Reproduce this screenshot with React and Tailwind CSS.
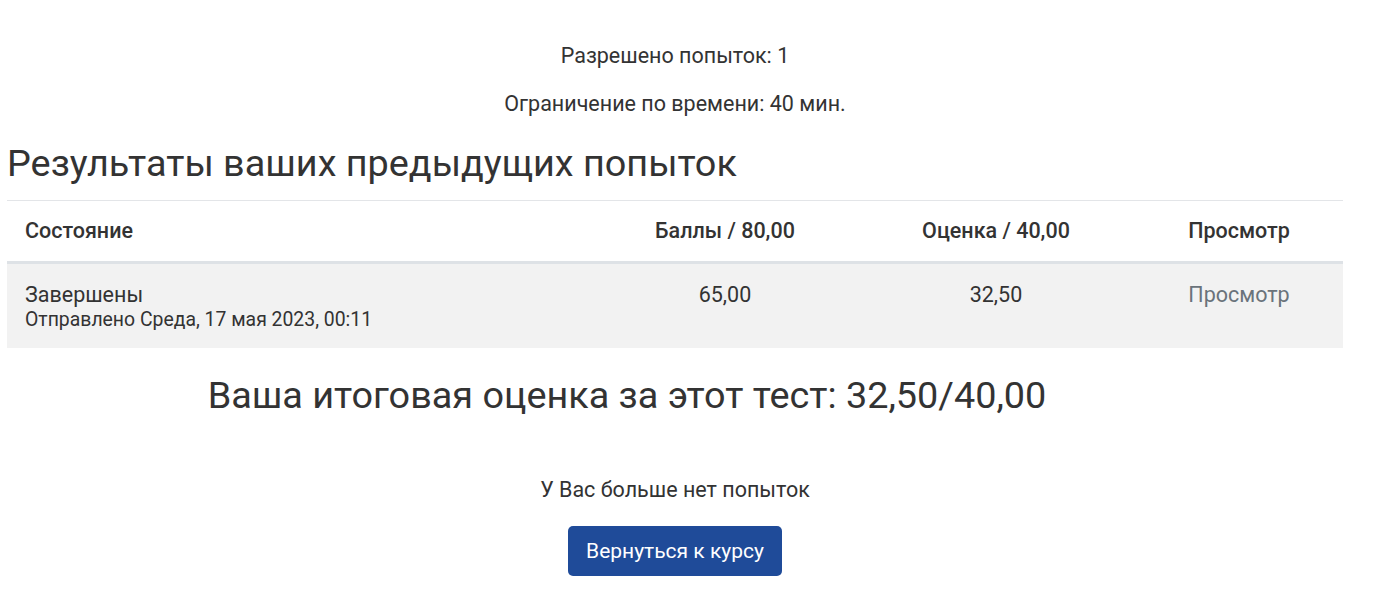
export default function App() {
  return (
    <div className="min-h-[609px] bg-white font-['Roboto',sans-serif] text-[#333]">
      <div className="w-[1336px] ml-[7px] pt-[41px]">
        <div className="text-center text-[21.5px] leading-[30px]">
          <p>Разрешено попыток: 1</p>
          <p className="mt-[18px]">Ограничение по времени: 40 мин.</p>
        </div>

        <h2 className="mt-[22px] text-[37.8px] leading-[44px] font-normal">
          Результаты ваших предыдущих попыток
        </h2>

        <table className="mt-[15px] w-full border-collapse text-[21.5px] leading-[30px]">
          <thead>
            <tr className="border-t border-[#e3e5e8] border-b-[3px] border-b-[#dee2e6]">
              <th className="w-[586px] text-left font-medium py-[15px] pl-[18px]">Состояние</th>
              <th className="w-[264px] text-center font-medium py-[15px]">Баллы / 80,00</th>
              <th className="w-[278px] text-center font-medium py-[15px]">Оценка / 40,00</th>
              <th className="text-center font-medium py-[15px]">Просмотр</th>
            </tr>
          </thead>
          <tbody>
            <tr className="bg-[#f2f2f2] align-top">
              <td className="pl-[18px] pt-[16px] pb-[18px]">
                <div>Завершены</div>
                <div className="text-[19.4px] leading-[20px]">Отправлено Среда, 17 мая 2023, 00:11</div>
              </td>
              <td className="text-center pt-[16px]">65,00</td>
              <td className="text-center pt-[16px]">32,50</td>
              <td className="text-center pt-[16px]">
                <a href="#" className="text-[#6a737b]">Просмотр</a>
              </td>
            </tr>
          </tbody>
        </table>

        <h3 className="mt-[25px] pr-[96px] text-center text-[37.8px] leading-[44px] font-normal">
          Ваша итоговая оценка за этот тест: 32,50/40,00
        </h3>

        <div className="mt-[58px] flex flex-col items-center text-[21.5px] leading-[30px]">
          <p>У Вас больше нет попыток</p>
          <button className="mt-[21px] h-[50px] w-[214px] rounded-[5px] bg-[#1f4b99] text-white text-[21px]">
            Вернуться к курсу
          </button>
        </div>
      </div>
    </div>
  );
}
